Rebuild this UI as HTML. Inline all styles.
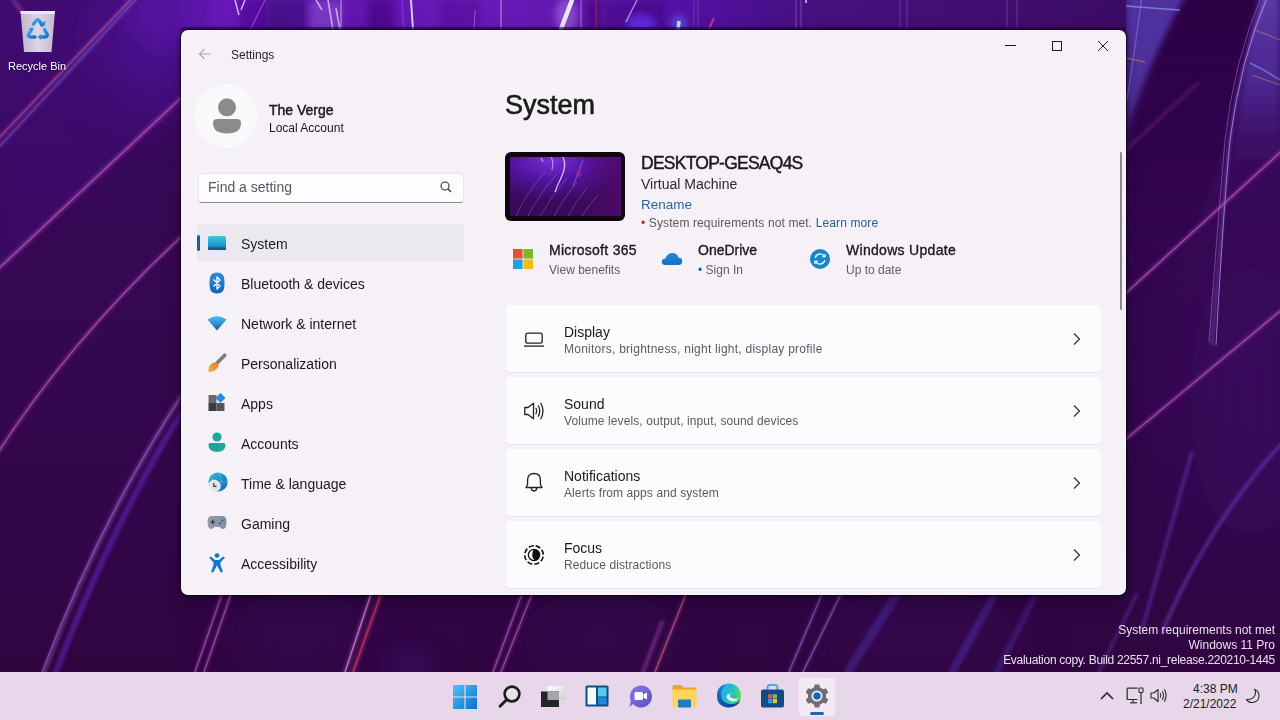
<!DOCTYPE html>
<html><head><meta charset="utf-8">
<style>
*{margin:0;padding:0;box-sizing:border-box}
html,body{width:1280px;height:720px;overflow:hidden}
body{font-family:"Liberation Sans",sans-serif;position:relative;background:#3b0c5e}
.a{position:absolute}
.t{position:absolute;white-space:nowrap;color:#1a1a1a;line-height:1}
#win{position:absolute;left:181px;top:30px;width:945px;height:565px;background:#f5f1f7;border-radius:7px;overflow:hidden;box-shadow:0 0 0 1px rgba(20,0,30,.55),0 0 3px 2px rgba(10,0,20,.35),0 6px 20px rgba(0,0,0,.3)}
#taskbar{position:absolute;left:0;top:672px;width:1280px;height:48px;background:#e8d6eb;border-top:2px solid #f0d6f0}
.lbl{font-size:14px}
.card{position:absolute;left:506px;width:595px;height:67px;background:#fcfbfe;border-radius:4px;box-shadow:0 1px 0 #e6e2e9}
.h{font-size:14px}
.s{font-size:12px;color:#5d5a60;letter-spacing:0.1px}
svg{position:absolute;overflow:visible}
</style></head><body>
<!-- WALLPAPER -->
<svg class="a" style="left:0;top:0" width="1280" height="720" viewBox="0 0 1280 720">
 <defs>
  <linearGradient id="bgv" x1="0" y1="0" x2="0" y2="1">
   <stop offset="0" stop-color="#3e0b68"/>
   <stop offset="0.35" stop-color="#360852"/>
   <stop offset="0.75" stop-color="#32064a"/>
   <stop offset="1" stop-color="#2e043a"/>
  </linearGradient>
  <filter id="b30" filterUnits="userSpaceOnUse" x="-200" y="-200" width="1680" height="1120"><feGaussianBlur stdDeviation="30"/></filter>
  <filter id="b12" filterUnits="userSpaceOnUse" x="-200" y="-200" width="1680" height="1120"><feGaussianBlur stdDeviation="12"/></filter>
  <filter id="b6" x="-50%" y="-50%" width="200%" height="200%"><feGaussianBlur stdDeviation="6"/></filter>
  <filter id="b3" x="-50%" y="-50%" width="200%" height="200%"><feGaussianBlur stdDeviation="3"/></filter>
  <filter id="b2" x="-50%" y="-50%" width="200%" height="200%"><feGaussianBlur stdDeviation="1.6"/></filter>
  <filter id="b1" x="-50%" y="-50%" width="200%" height="200%"><feGaussianBlur stdDeviation="0.6"/></filter>
  <linearGradient id="tbg" x1="0" y1="0" x2="1" y2="0">
   <stop offset="0" stop-color="#5614a4"/>
   <stop offset="0.04" stop-color="#6a1ab8"/>
   <stop offset="0.1" stop-color="#5a14a8"/>
   <stop offset="0.3" stop-color="#6a1ab8"/>
   <stop offset="0.45" stop-color="#6018ae"/>
   <stop offset="0.55" stop-color="#5010a0"/>
   <stop offset="0.68" stop-color="#46107c"/>
   <stop offset="0.85" stop-color="#420e72"/>
   <stop offset="1" stop-color="#3c0b64"/>
  </linearGradient>
  <linearGradient id="dkb" x1="0" y1="0" x2="0" y2="1"><stop offset="0" stop-color="#2a0442" stop-opacity="0.95"/><stop offset="0.5" stop-color="#2e0548" stop-opacity="0.75"/><stop offset="1" stop-color="#30064a" stop-opacity="0"/></linearGradient>
  <linearGradient id="rgr" x1="0" y1="0" x2="0" y2="1"><stop offset="0" stop-color="#6040b0" stop-opacity="0.9"/><stop offset="0.4" stop-color="#5030a0" stop-opacity="0.75"/><stop offset="0.85" stop-color="#3a0a60" stop-opacity="0"/></linearGradient>
 </defs>
 <rect width="1280" height="720" fill="url(#bgv)"/>
 <!-- broad glows -->
 <ellipse cx="420" cy="20" rx="300" ry="60" fill="#5a16a8" opacity="0.6" filter="url(#b30)"/>
 <ellipse cx="200" cy="40" rx="110" ry="70" fill="#5212a0" opacity="0.55" filter="url(#b30)"/>
 <ellipse cx="950" cy="0" rx="180" ry="40" fill="#4a1080" opacity="0.6" filter="url(#b30)"/>
 <path d="M1262 -10 Q1236 70 1232 230 L1280 230 L1280 -10 Z" fill="url(#rgr)" filter="url(#b3)"/>
 <path d="M1135 -10 L1190 -10 Q1150 60 1128 150 L1126 150 L1126 -10 Z" fill="#5238a8" opacity="0.85" filter="url(#b3)"/>
 
 <!-- region above line 2 slightly lighter -->
 <path d="M0 269 L182 97 L182 0 L0 0 Z" fill="#4a1090" opacity="0.3" filter="url(#b6)"/>
 <!-- bottom band patches -->
 <ellipse cx="300" cy="640" rx="70" ry="50" fill="#3c0866" opacity="0.3" filter="url(#b30)"/>
 <ellipse cx="410" cy="665" rx="25" ry="18" fill="#4a1890" opacity="0.35" filter="url(#b12)"/>
 <ellipse cx="600" cy="640" rx="80" ry="50" fill="#3a0862" opacity="0.3" filter="url(#b30)"/>
 <ellipse cx="920" cy="640" rx="100" ry="50" fill="#3e0a66" opacity="0.3" filter="url(#b30)"/>
 <!-- dark curved band on right -->
 <path d="M1190 -10 Q1150 60 1126 130 L1126 330 Q1200 240 1226 140 Q1244 60 1260 -10 Z" fill="url(#dkb)" filter="url(#b3)"/>
 <!-- top band -->
 <rect x="182" y="0" width="944" height="31" fill="url(#tbg)"/>
 <ellipse cx="170" cy="10" rx="40" ry="40" fill="#5a16a8" opacity="0.6" filter="url(#b12)"/>
 <ellipse cx="1250" cy="400" rx="60" ry="140" fill="#40086a" opacity="0.45" filter="url(#b30)"/>
 <!-- top streaks -->
 <g filter="url(#b3)">
  <rect x="368" y="0" width="26" height="32" fill="#40087a" opacity="0.6"/>
  <rect x="265" y="0" width="40" height="32" fill="#3c0870" opacity="0.5"/>
  <rect x="440" y="0" width="40" height="32" fill="#4a0c88" opacity="0.35"/>
  <rect x="605" y="0" width="60" height="32" fill="#3c0a78" opacity="0.45"/>
  <rect x="586" y="0" width="16" height="32" fill="#3a0868" opacity="0.55"/>
  <rect x="240" y="0" width="60" height="32" fill="#4a0c90" opacity="0.5"/>
  <rect x="310" y="0" width="32" height="32" fill="#9a60e0" opacity="0.45"/>
  <ellipse cx="566" cy="16" rx="11" ry="18" fill="#b080f0" opacity="0.45"/>
  <ellipse cx="641" cy="24" rx="14" ry="9" fill="#6a30ff" opacity="0.7"/>
  <ellipse cx="679" cy="24" rx="8" ry="9" fill="#5a60ff" opacity="0.6"/>
 </g>
 <g filter="url(#b1)" fill="none">
  <path d="M572 0 L561 29" stroke="#f4f8ff" stroke-width="4.5" opacity="0.9" stroke-linecap="round"/>
  <path d="M679 21 L678 30" stroke="#e0f4ff" stroke-width="3.5" opacity="0.85"/>
  <path d="M235 0 L239 15 M245 0 L241 10" stroke="#e8d0ff" stroke-width="1.6" opacity="0.8"/>
  <path d="M265 0 Q258 14 250 30" stroke="#a070e0" stroke-width="1.5" opacity="0.55"/>
  <path d="M316 0 L322 10 M328 0 L333 30 M336 8 L340 30" stroke="#e8d8ff" stroke-width="1.6" opacity="0.7"/>
  <path d="M341 0 V30" stroke="#d0a8ff" stroke-width="1.5" opacity="0.6"/>
  <path d="M411 0 L413 30" stroke="#f0e4ff" stroke-width="2" opacity="0.85"/>
  <path d="M402 0 L404 30" stroke="#7a40ff" stroke-width="2" opacity="0.5"/>
  <path d="M475 10 L474 30" stroke="#b090f0" stroke-width="1.2" opacity="0.5"/>
  <path d="M501 0 V30" stroke="#d0b0f8" stroke-width="1.4" opacity="0.6"/>
  <path d="M581 0 V30" stroke="#d890d0" stroke-width="1.4" opacity="0.5"/>
  <path d="M596 0 V30" stroke="#b02050" stroke-width="2" opacity="0.5"/>
  <path d="M637 0 L626 22" stroke="#d8c0ff" stroke-width="1.4" opacity="0.7"/>
  <path d="M694 0 V30 M698 0 V30" stroke="#8a40b0" stroke-width="1.5" opacity="0.5"/>
  <path d="M714 18 L709 29" stroke="#ff4070" stroke-width="2.2" opacity="0.65"/>
  <path d="M796 0 V30 M801 0 V30" stroke="#8a50c8" stroke-width="1.5" opacity="0.5"/>
  <path d="M806 0 V3" stroke="#ffe0f0" stroke-width="2" opacity="0.7"/>
  <path d="M900 0 V30 M907 0 V30 M1007 0 V30 M1017 0 V30" stroke="#8058c8" stroke-width="1.2" opacity="0.45"/>
  <path d="M1126 6 Q1150 8 1180 10" stroke="#a0c0ff" stroke-width="1.5" opacity="0.55"/>
  <path d="M1126 58 L1145 62" stroke="#ff8060" stroke-width="1.5" opacity="0.5"/>
  <path d="M1255 30 L1280 40 M1252 75 L1280 85" stroke="#d09060" stroke-width="1.3" opacity="0.5"/>
  <path d="M1250 63 Q1265 70 1280 80" stroke="#a0c0ff" stroke-width="1.5" opacity="0.45"/>
 </g>
 <rect x="181" y="27" width="945" height="3" fill="#2a0450" opacity="0.55" filter="url(#b1)"/>
 <!-- bright curved line on right -->
 <path d="M1268 -5 Q1240 60 1230 140 Q1222 220 1212 345" stroke="#9070e0" stroke-width="3" fill="none" opacity="0.35" filter="url(#b2)"/>
 <path d="M1268 -5 Q1240 60 1230 140 Q1224 200 1216 345" stroke="#c0a0f0" stroke-width="1" fill="none" opacity="0.7" filter="url(#b1)"/>
 <path d="M1262 -5 Q1234 60 1225 140 Q1218 220 1209 342" stroke="#b080e0" stroke-width="1" fill="none" opacity="0.5" filter="url(#b1)"/>
 <path d="M1142 -5 Q1135 50 1127 100" stroke="#8a70e0" stroke-width="1.5" fill="none" opacity="0.6" filter="url(#b1)"/>
 <!-- diagonal lines: glow -->
 <g fill="none" filter="url(#b2)" stroke-linecap="round" stroke="#9a3aa8" stroke-width="4" opacity="0.55">
  <path d="M-5 142 L135 -5" stroke="#a84a98" stroke-width="3"/>
  <path d="M0 146 L140 -5" stroke="#7a50c0" stroke-width="3"/>
  <path d="M13 0 L22 12"/>
  <path d="M-5 272 L182 97" stroke-width="5"/>
  <path d="M-5 457 Q70 340 182 236"/>
  <path d="M44 672 Q100 520 182 395" stroke="#9048a8" stroke-width="5"/>
  <path d="M56 672 Q112 525 182 412" stroke="#6a28c0" stroke-width="6"/>
  <path d="M195 672 L222 594 M204 672 L231 594" stroke-width="3"/>
  <path d="M345 672 L371 594"/>
  <path d="M353 672 L381 594" stroke="#a02860" stroke-width="5"/>
  <path d="M493 672 L522 594 M501 672 L532 594" stroke-width="3"/>
  <path d="M643 672 L662 622"/>
  <path d="M655 672 L686 594" stroke="#a04070" stroke-width="3"/>
  <path d="M789 672 L822 594 M803 672 L841 594" stroke="#7040a8" stroke-width="3"/>
  <path d="M848 672 L897 594" stroke="#5a40d0" stroke-width="9" opacity="0.6"/>
  <path d="M952 672 L995 594" stroke="#5a40d0" stroke-width="8" opacity="0.6"/>
  <path d="M997 672 L1036 594" stroke="#5a40c8" stroke-width="7" opacity="0.5"/>
  <path d="M1099 672 L1137 594" stroke="#7a48c0" stroke-width="4" opacity="0.6"/>
  <path d="M1126 150 L1198 83" opacity="0.5"/>
  <path d="M1126 293 L1285 148"/>
  <path d="M1126 439 L1285 307"/>
  <path d="M1162 632 Q1210 520 1285 440" stroke="#7040c0"/>
  <path d="M1142 630 L1192 452" stroke="#5a38b0"/>
 </g>
 <!-- diagonal lines: core -->
 <g fill="none" filter="url(#b1)" stroke-linecap="round" stroke="#c070c8" stroke-width="1.1" opacity="0.6">
  <path d="M-5 142 L135 -5" stroke="#c06aa8" opacity="0.7"/>
  <path d="M0 146 L140 -5" stroke="#9070d0" opacity="0.6"/>
  <path d="M-5 272 L182 97"/>
  <path d="M-5 457 Q70 340 182 236"/>
  <path d="M42 672 Q100 520 182 395" stroke="#a070f0"/>
  <path d="M195 672 L222 594 M204 672 L231 594"/>
  <path d="M345 672 L371 594" stroke="#f0c0f8" stroke-width="1.4" opacity="0.9"/>
  <path d="M353 672 L381 594" stroke="#d04070" stroke-width="1.6"/>
  <path d="M493 672 L522 594 M501 672 L532 594"/>
  <path d="M655 672 L686 594" stroke="#d08090"/>
  <path d="M789 672 L822 594 M803 672 L841 594" stroke="#b070c0"/>
  <path d="M1126 293 L1285 148"/>
  <path d="M1126 439 L1285 307"/>
 </g>
</svg>

<!-- Recycle bin -->
<svg style="left:18px;top:9px" width="40" height="46" viewBox="0 0 40 46">
 <defs><linearGradient id="rbg" x1="0" y1="0" x2="1" y2="0"><stop offset="0" stop-color="#bdb4ca"/><stop offset="0.5" stop-color="#dcd6e4"/><stop offset="1" stop-color="#c4bad0"/></linearGradient>
 <linearGradient id="rcy" x1="0" y1="0" x2="1" y2="1"><stop offset="0" stop-color="#3cb0f0"/><stop offset="1" stop-color="#1a6cc8"/></linearGradient></defs>
 <path d="M2.5 2 L37 2 L33.5 43 L6 43 Z" fill="url(#rbg)"/>
 <path d="M2.5 2 L37 2 L36.7 5 L2.8 5 Z" fill="#ede6f4"/>
 <g stroke="url(#rcy)" stroke-width="3.4" fill="none" stroke-linecap="round" stroke-linejoin="round">
  <path d="M15.5 15 L18 11.5 Q19.5 9.8 21 11.5 L24 16"/>
  <path d="M26.5 20.5 L29 25 Q30 27.5 27 28 L22 28"/>
  <path d="M17 28 L12.5 28 Q9.5 27.5 10.8 25 L13 21"/>
 </g>
 <g fill="#2a8ee0">
  <path d="M22 14.5 L27 17 L27.5 12 Z"/>
  <path d="M23 25 L20 28 L23 31 Z"/>
  <path d="M11 19 L15.5 18.5 L14 23.5 Z"/>
 </g>
</svg>
<div class="t" style="left:8px;top:60.7px;font-size:11px;color:#fff;text-shadow:0 1px 2px rgba(0,0,0,.6)">Recycle Bin</div>

<!-- WINDOW -->
<div id="win"></div>
<!-- back arrow -->
<svg style="left:198px;top:48px" width="14" height="12" viewBox="0 0 14 12">
 <path d="M13 6 H1.5 M6.5 1 L1.5 6 L6.5 11" stroke="#a9a6ad" stroke-width="1.1" fill="none"/>
</svg>
<div class="t" style="left:231px;top:48.6px;font-size:12px;color:#262626">Settings</div>
<!-- caption buttons -->
<div class="a" style="left:1005px;top:45px;width:11px;height:1px;background:#1b1b1b"></div>
<div class="a" style="left:1052px;top:41px;width:10px;height:10px;border:1px solid #1b1b1b"></div>
<svg style="left:1097px;top:40px" width="12" height="12" viewBox="0 0 12 12">
 <path d="M1 1 L11 11 M11 1 L1 11" stroke="#1b1b1b" stroke-width="1" fill="none"/>
</svg>

<!-- avatar -->
<div class="a" style="left:194px;top:84px;width:64px;height:64px;border-radius:50%;background:radial-gradient(circle,#fafafc 0,#f9f8fb 70%,rgba(249,248,251,0) 100%)"></div>
<svg style="left:212px;top:98px" width="30" height="37" viewBox="0 0 30 37">
 <circle cx="15" cy="9.3" r="9" fill="#8b8b8b"/>
 <path d="M1 25 Q1 21 5 21 H25 Q29 21 29 25 Q29 35.5 15 35.5 Q1 35.5 1 25 Z" fill="#8b8b8b"/>
</svg>
<div class="t" style="left:269px;top:103.3px;font-size:14px;-webkit-text-stroke:0.45px #1a1a1a">The Verge</div>
<div class="t" style="left:269px;top:121.6px;font-size:12px">Local Account</div>

<!-- search -->
<div class="a" style="left:198px;top:173px;width:266px;height:30px;background:#fdfcfe;border-radius:4px;border:1px solid #e8e5eb;border-bottom:1px solid #8c898f"></div>
<div class="t" style="left:208px;top:180px;font-size:14px;color:#5b5860">Find a setting</div>
<svg style="left:440px;top:181px" width="12" height="12" viewBox="0 0 12 12">
 <circle cx="5" cy="5" r="4" stroke="#333" stroke-width="1.1" fill="none"/>
 <path d="M8 8 L11 11" stroke="#333" stroke-width="1.2"/>
</svg>

<!-- nav -->
<div class="a" style="left:197px;top:224px;width:267px;height:38px;background:#ece8ef;border-radius:4px"></div>
<div class="a" style="left:197px;top:235px;width:3px;height:16px;background:#1d5d9b;border-radius:2px"></div>
<div class="t lbl" style="left:241px;top:237.4px">System</div>
<div class="t lbl" style="left:241px;top:277.4px">Bluetooth &amp; devices</div>
<div class="t lbl" style="left:241px;top:317.4px">Network &amp; internet</div>
<div class="t lbl" style="left:241px;top:357.4px">Personalization</div>
<div class="t lbl" style="left:241px;top:397.4px">Apps</div>
<div class="t lbl" style="left:241px;top:437.4px">Accounts</div>
<div class="t lbl" style="left:241px;top:477.4px">Time &amp; language</div>
<div class="t lbl" style="left:241px;top:517.4px">Gaming</div>
<div class="t lbl" style="left:241px;top:557.4px">Accessibility</div>


<!-- nav icons -->
<svg style="left:207px;top:235px" width="20" height="16" viewBox="0 0 20 16">
 <defs><linearGradient id="sysg" x1="0" y1="0" x2="0" y2="1"><stop offset="0" stop-color="#3ec6e6"/><stop offset="0.7" stop-color="#1b98c8"/><stop offset="1" stop-color="#0d5f94"/></linearGradient></defs>
 <rect x="1" y="1" width="18" height="14" rx="1.5" fill="url(#sysg)"/>
 <rect x="1" y="12.5" width="18" height="2.5" fill="#0b5687" opacity="0.8"/>
</svg>
<svg style="left:209px;top:272px" width="16" height="22" viewBox="0 0 16 22">
 <defs><linearGradient id="btg" x1="0" y1="0" x2="0" y2="1"><stop offset="0" stop-color="#2b8fe0"/><stop offset="1" stop-color="#1464b8"/></linearGradient></defs>
 <path d="M8 0.5 C14 0.5 15.5 4 15.5 11 C15.5 18 14 21.5 8 21.5 C2 21.5 0.5 18 0.5 11 C0.5 4 2 0.5 8 0.5 Z" fill="url(#btg)"/>
 <path d="M4.5 7.5 L11 14 L8 17 V5 L11 8 L4.5 14.5" stroke="#fff" stroke-width="1.3" fill="none" stroke-linejoin="round"/>
</svg>
<svg style="left:207px;top:315px" width="20" height="16" viewBox="0 0 20 16">
 <defs><linearGradient id="wfg" x1="0" y1="0" x2="0" y2="1"><stop offset="0" stop-color="#4cc2f0"/><stop offset="1" stop-color="#0f5fae"/></linearGradient></defs>
 <path d="M0.5 4.5 Q10 -2.5 19.5 4.5 L10 15.5 Z" fill="url(#wfg)"/>
</svg>
<svg style="left:207px;top:353px" width="20" height="20" viewBox="0 0 20 20">
 <path d="M10.5 9.5 L17.8 2.2" stroke="#7c7983" stroke-width="3.6" stroke-linecap="round"/>
 <defs><linearGradient id="brg" x1="0" y1="1" x2="1" y2="0"><stop offset="0" stop-color="#f7b04a"/><stop offset="1" stop-color="#e07a34"/></linearGradient></defs>
 <path d="M1.5 18.8 Q1 14 4 11 Q7 8.5 10.5 9.5 L11.5 10.5 Q12 14 8.5 17 Q5.5 19.3 1.5 18.8 Z" fill="url(#brg)"/>
</svg>
<svg style="left:208px;top:392px" width="19" height="20" viewBox="0 0 19 20">
 <rect x="0.5" y="3" width="8" height="8" fill="#6b6873"/>
 <rect x="0.5" y="11" width="8" height="8" fill="#3c3a42"/>
 <rect x="8.5" y="11" width="8" height="8" fill="#56535c"/>
 <path d="M12.5 1 L17.5 6 L12.5 11 L7.5 6 Z" fill="#1f8ee0"/>
</svg>
<svg style="left:208px;top:432px" width="18" height="21" viewBox="0 0 18 21">
 <circle cx="9" cy="5" r="4.6" fill="#1fa59a"/>
 <path d="M0.5 12.5 Q0.5 11 2.5 11 H15.5 Q17.5 11 17.5 12.5 Q17.5 20 9 20 Q0.5 20 0.5 12.5 Z" fill="#1fa59a"/>
</svg>
<svg style="left:207px;top:472px" width="21" height="21" viewBox="0 0 21 21">
 <defs><linearGradient id="tmg" x1="0" y1="0" x2="1" y2="1"><stop offset="0" stop-color="#36c2c8"/><stop offset="0.5" stop-color="#1f8fd0"/><stop offset="1" stop-color="#1460b0"/></linearGradient></defs>
 <circle cx="11" cy="10" r="9.6" fill="url(#tmg)"/>
 <path d="M4 5 Q8 9 5 14 M12 1 Q16 8 13 19 M2 10 H20" stroke="#7ed8e8" stroke-width="0.8" fill="none" opacity="0.5"/>
 <circle cx="7.3" cy="14" r="5.8" fill="#e4e2e8" stroke="#f7f6f9" stroke-width="1"/>
 <path d="M6.8 11 V14.4 H9.4" stroke="#333" stroke-width="1.1" fill="none"/>
</svg>
<svg style="left:207px;top:515px" width="20" height="15" viewBox="0 0 20 15">
 <defs><linearGradient id="gmg" x1="0" y1="0" x2="1" y2="0"><stop offset="0" stop-color="#9e9ba6"/><stop offset="1" stop-color="#7d8ea6"/></linearGradient></defs>
 <path d="M4 1 H16 Q19.5 1 19.5 7 Q19.5 14 16 14 Q14 14 12.5 12 H7.5 Q6 14 4 14 Q0.5 14 0.5 7 Q0.5 1 4 1 Z" fill="url(#gmg)"/>
 <path d="M3.5 7 H8 M5.75 4.8 V9.2" stroke="#222" stroke-width="1.1"/>
 <circle cx="13" cy="8.5" r="1.1" fill="#1b64b0"/><circle cx="15.5" cy="5.5" r="1.1" fill="#1b64b0"/>
</svg>
<svg style="left:208px;top:553px" width="18" height="20" viewBox="0 0 18 20">
 <circle cx="9" cy="2.6" r="2.4" fill="#1478c8"/>
 <path d="M1 4.5 L3 3.5 L7 7 H11 L15 3.5 L17 4.5 L12.5 9.5 V12 L15 19 L12.8 19.5 L9 12.5 L5.2 19.5 L3 19 L5.5 12 V9.5 Z" fill="#1478c8"/>
</svg>

<!-- content header -->
<div class="t" style="left:505px;top:91.5px;font-size:27px;-webkit-text-stroke:0.6px #1a1a1a">System</div>
<div class="t" style="left:641px;top:155.2px;font-size:17.5px;letter-spacing:-0.75px;-webkit-text-stroke:0.45px #1a1a1a">DESKTOP-GESAQ4S</div>
<div class="t" style="left:641px;top:176.8px;font-size:14px;color:#2b2b2b">Virtual Machine</div>
<div class="t" style="left:641px;top:198.2px;font-size:13.5px;color:#2a64a0">Rename</div>
<div class="t" style="left:641px;top:216.8px;font-size:12px;letter-spacing:0.12px;color:#5b5860"><span style="color:#c42b1c">&#8226;</span> System requirements not met. <span style="color:#1f5fa0">Learn more</span></div>

<div class="t" style="left:549px;top:243.2px;font-size:14px;letter-spacing:0.3px;-webkit-text-stroke:0.35px #1a1a1a">Microsoft 365</div>
<div class="t" style="left:549px;top:264.1px;font-size:12px;color:#5f5c62">View benefits</div>
<div class="t" style="left:698px;top:243.2px;font-size:14px;-webkit-text-stroke:0.35px #1a1a1a">OneDrive</div>
<div class="t" style="left:698px;top:264.1px;font-size:12px;color:#5f5c62"><span style="color:#1f5fa0">&#8226;</span> Sign In</div>
<div class="t" style="left:846px;top:243.2px;font-size:14px;letter-spacing:0.3px;-webkit-text-stroke:0.35px #1a1a1a">Windows Update</div>
<div class="t" style="left:846px;top:264.1px;font-size:12px;color:#5f5c62">Up to date</div>

<!-- cards -->
<div class="card" style="top:305px"></div>
<div class="card" style="top:377px"></div>
<div class="card" style="top:449px"></div>
<div class="card" style="top:521px"></div>
<div class="t h" style="left:564px;top:325.4px">Display</div>
<div class="t s" style="left:564px;top:343.1px;letter-spacing:0.25px">Monitors, brightness, night light, display profile</div>
<div class="t h" style="left:564px;top:397.4px">Sound</div>
<div class="t s" style="left:564px;top:415.1px">Volume levels, output, input, sound devices</div>
<div class="t h" style="left:564px;top:469.4px">Notifications</div>
<div class="t s" style="left:564px;top:487.1px">Alerts from apps and system</div>
<div class="t h" style="left:564px;top:541.4px">Focus</div>
<div class="t s" style="left:564px;top:559.1px">Reduce distractions</div>


<!-- thumbnail -->
<svg style="left:505px;top:152px" width="120" height="69" viewBox="0 0 120 69">
 <defs>
  <radialGradient id="thg" cx="0.38" cy="0.05" r="0.7"><stop offset="0" stop-color="#7a2ed8"/><stop offset="0.5" stop-color="#5214a0"/><stop offset="1" stop-color="#3a0a5c"/></radialGradient>
  <linearGradient id="thr" x1="0" y1="0" x2="1" y2="0"><stop offset="0.6" stop-color="#5a0a70" stop-opacity="0"/><stop offset="1" stop-color="#5a0a70" stop-opacity="0.6"/></linearGradient>
  <clipPath id="thc"><rect x="5" y="5" width="111" height="59"/></clipPath>
  <filter id="thb"><feGaussianBlur stdDeviation="0.6"/></filter>
 </defs>
 <rect x="0" y="0" width="120" height="69" rx="6" fill="#10060f"/>
 <rect x="5" y="5" width="111" height="59" fill="url(#thg)"/>
 <rect x="5" y="5" width="111" height="59" fill="url(#thr)"/>
 <g clip-path="url(#thc)" fill="none" filter="url(#thb)">
  <g stroke="#c080f0" stroke-opacity="0.35" stroke-width="1">
   <path d="M10 66 Q22 40 40 20"/><path d="M22 66 Q34 42 52 22"/><path d="M34 66 Q46 44 62 26"/>
   <path d="M48 66 Q58 46 72 30"/><path d="M62 66 Q70 50 82 36"/><path d="M76 66 Q84 52 94 42"/>
  </g>
  <path d="M58 5 Q62 14 56 26 Q52 34 50 40" stroke="#eadcff" stroke-opacity="0.8" stroke-width="1.4"/>
  <path d="M46 5 Q49 10 47 18" stroke="#d8b8ff" stroke-opacity="0.7" stroke-width="1.2"/>
  <path d="M36 6 L38 10" stroke="#e0c8ff" stroke-opacity="0.7" stroke-width="1.2"/>
  <path d="M78 8 Q74 20 68 34" stroke="#b070f0" stroke-opacity="0.5" stroke-width="1.2"/>
  <circle cx="74" cy="22" r="3" fill="#c03080" opacity="0.4"/>
 </g>
</svg>
<!-- M365 logo -->
<svg style="left:512px;top:248px" width="22" height="22" viewBox="0 0 22 22">
 <rect x="1" y="1" width="9.6" height="9.6" fill="#e4532e"/>
 <rect x="11.4" y="1" width="9.6" height="9.6" fill="#78b82c"/>
 <rect x="1" y="11.4" width="9.6" height="9.6" fill="#1ea0e0"/>
 <rect x="11.4" y="11.4" width="9.6" height="9.6" fill="#f6b81c"/>
</svg>
<!-- OneDrive -->
<svg style="left:661px;top:251px" width="22" height="15" viewBox="0 0 22 15">
 <defs><linearGradient id="odg" x1="0" y1="0" x2="0" y2="1"><stop offset="0" stop-color="#1e8ad8"/><stop offset="1" stop-color="#1570c0"/></linearGradient></defs>
 <path d="M4.5 14 Q0.5 14 0.8 10.5 Q1.2 7.5 4.5 7.5 Q6 2 11.5 2 Q16 2 17.5 6.5 Q21.5 7 21.2 10.5 Q21 14 17.5 14 Z" fill="url(#odg)"/>
</svg>
<!-- Windows Update -->
<svg style="left:809px;top:248px" width="22" height="22" viewBox="0 0 22 22">
 <circle cx="11" cy="11" r="10" fill="#1a86c8"/>
 <path d="M6.2 9.8 A5 5 0 0 1 15.3 8.2" stroke="#e8f6ff" stroke-width="1.4" fill="none"/>
 <path d="M15.8 12.2 A5 5 0 0 1 6.7 13.8" stroke="#e8f6ff" stroke-width="1.4" fill="none"/>
 <path d="M13.2 8.6 L16 8.8 L16.2 6" stroke="#e8f6ff" stroke-width="1.3" fill="none"/>
 <path d="M8.8 13.4 L6 13.2 L5.8 16" stroke="#e8f6ff" stroke-width="1.3" fill="none"/>
</svg>
<!-- card icons -->
<svg style="left:523px;top:332px" width="22" height="16" viewBox="0 0 22 16">
 <rect x="2.8" y="1.2" width="16.4" height="10" rx="1.8" stroke="#222" stroke-width="1.3" fill="none"/>
 <path d="M1 14.1 H21" stroke="#333" stroke-width="1.4"/>
</svg>
<svg style="left:523px;top:401px" width="22" height="20" viewBox="0 0 22 20">
 <path d="M1.8 6.5 H5 L10.5 2.2 V17.8 L5 13.5 H1.8 Z" stroke="#222" stroke-width="1.3" fill="none" stroke-linejoin="round"/>
 <path d="M13 7.3 Q14.5 10 13 12.7" stroke="#222" stroke-width="1.3" fill="none" stroke-linecap="round"/>
 <path d="M15.3 4.8 Q18.3 10 15.3 15.2" stroke="#222" stroke-width="1.3" fill="none" stroke-linecap="round"/>
 <path d="M17.8 2.2 Q22.2 10 17.8 17.8" stroke="#222" stroke-width="1.3" fill="none" stroke-linecap="round"/>
</svg>
<svg style="left:524px;top:472px" width="20" height="21" viewBox="0 0 20 21">
 <path d="M2 15.5 L3.6 12.5 V8 Q3.6 1.5 10 1.5 Q16.4 1.5 16.4 8 V12.5 L18 15.5 Z" stroke="#222" stroke-width="1.3" fill="none" stroke-linejoin="round"/>
 <path d="M7.3 15.8 Q7.3 19 10 19 Q12.7 19 12.7 15.8" stroke="#222" stroke-width="1.3" fill="none"/>
</svg>
<svg style="left:523px;top:544px" width="22" height="22" viewBox="0 0 22 22">
 <circle cx="11" cy="11" r="9.3" stroke="#111" stroke-width="1.6" fill="none" stroke-dasharray="5.2 2.1" transform="rotate(-80 11 11)"/>
 <circle cx="11" cy="11" r="5.6" stroke="#111" stroke-width="1.3" fill="none"/>
 <path d="M10.5 5.4 A5.6 5.6 0 1 1 12 16.5 Q9 14 9.3 10.5 Q9.5 7.5 10.5 5.4 Z" fill="#111"/>
</svg>
<!-- chevrons -->
<svg style="left:1072px;top:332px" width="10" height="14" viewBox="0 0 10 14">
 <path d="M2 1.5 L7.5 7 L2 12.5" stroke="#3a3a3a" stroke-width="1.3" fill="none"/>
</svg>
<svg style="left:1072px;top:404px" width="10" height="14" viewBox="0 0 10 14">
 <path d="M2 1.5 L7.5 7 L2 12.5" stroke="#3a3a3a" stroke-width="1.3" fill="none"/>
</svg>
<svg style="left:1072px;top:476px" width="10" height="14" viewBox="0 0 10 14">
 <path d="M2 1.5 L7.5 7 L2 12.5" stroke="#3a3a3a" stroke-width="1.3" fill="none"/>
</svg>
<svg style="left:1072px;top:548px" width="10" height="14" viewBox="0 0 10 14">
 <path d="M2 1.5 L7.5 7 L2 12.5" stroke="#3a3a3a" stroke-width="1.3" fill="none"/>
</svg>

<!-- scrollbar -->
<div class="a" style="left:1120px;top:152px;width:2px;height:158px;background:#8a878d;border-radius:1px"></div>

<!-- TASKBAR -->
<div id="taskbar"></div>
<div class="t" style="left:1193px;top:683px;font-size:12px;color:#1a1a1a">4:38 PM</div>
<div class="t" style="left:1183px;top:698px;font-size:12px;color:#1a1a1a">2/21/2022</div>


<!-- taskbar icons -->
<svg style="left:452px;top:684px" width="26" height="26" viewBox="0 0 26 26">
 <defs><linearGradient id="stg" x1="0" y1="0" x2="1" y2="1"><stop offset="0" stop-color="#4cc4f6"/><stop offset="1" stop-color="#0c6fcf"/></linearGradient></defs>
 <path d="M1 1 H12.4 V12.4 H1 Z M13.6 1 H25 V12.4 H13.6 Z M1 13.6 H12.4 V25 H1 Z M13.6 13.6 H25 V25 H13.6 Z" fill="url(#stg)"/>
</svg>
<svg style="left:497px;top:684px" width="26" height="26" viewBox="0 0 26 26">
 <circle cx="15" cy="10" r="7.4" stroke="#1c1c1c" stroke-width="2.6" fill="#e8e0ea"/>
 <path d="M9.8 15.4 L3 22.3" stroke="#1c1c1c" stroke-width="2.8" stroke-linecap="round"/>
</svg>
<svg style="left:540px;top:684px" width="27" height="26" viewBox="0 0 27 26">
 <defs><linearGradient id="tvg" x1="0" y1="0" x2="1" y2="1"><stop offset="0" stop-color="#ffffff"/><stop offset="1" stop-color="#d0ccd4"/></linearGradient></defs>
 <rect x="7.5" y="2" width="17.5" height="14" fill="url(#tvg)"/>
 <rect x="1" y="7.5" width="18" height="15.5" fill="#252428"/>
 <rect x="7.5" y="7.5" width="11.5" height="8.5" fill="#a8a5ad"/>
</svg>
<svg style="left:584px;top:684px" width="26" height="25" viewBox="0 0 26 25">
 <rect x="1.5" y="1.5" width="23" height="21" rx="1.5" fill="#0f4f86"/>
 <rect x="3.5" y="3.5" width="8.5" height="17" fill="#f4fbff"/>
 <rect x="14" y="3.5" width="8.5" height="9" fill="#5cc8f0"/>
 <rect x="14" y="13.5" width="8.5" height="7" fill="#1f8ae0"/>
</svg>
<svg style="left:628px;top:684px" width="25" height="25" viewBox="0 0 25 25">
 <defs><linearGradient id="chg" x1="0" y1="0" x2="1" y2="1"><stop offset="0" stop-color="#8b7ce6"/><stop offset="1" stop-color="#5a4bc8"/></linearGradient></defs>
 <path d="M12.5 1.5 A11 11 0 1 1 5 20 L1.5 23 L2.8 17 A11 11 0 0 1 12.5 1.5 Z" fill="url(#chg)"/>
 <rect x="6.5" y="8" width="8.5" height="8" rx="1.5" fill="#fff"/>
 <path d="M15.5 10.5 L19 8.5 V15.5 L15.5 13.5 Z" fill="#fff"/>
</svg>
<svg style="left:671px;top:683px" width="27" height="26" viewBox="0 0 27 26">
 <path d="M1.5 3.5 Q1.5 2 3 2 H10 L12.5 4.5 H24 Q25.5 4.5 25.5 6 V8 H1.5 Z" fill="#e9a526"/>
 <path d="M1.5 6.5 H25.5 V23 Q25.5 24.5 24 24.5 H3 Q1.5 24.5 1.5 23 Z" fill="#fcd55a"/>
 <rect x="7" y="16.5" width="13" height="8" rx="1" fill="#1e7bc4"/>
</svg>
<svg style="left:716px;top:682px" width="26" height="27" viewBox="0 0 26 27">
 <defs>
  <linearGradient id="edg1" x1="0" y1="0" x2="1" y2="0.4"><stop offset="0" stop-color="#28a8e8"/><stop offset="0.55" stop-color="#20bcd0"/><stop offset="1" stop-color="#5ad860"/></linearGradient>
  <linearGradient id="edg2" x1="0" y1="0" x2="0.4" y2="1"><stop offset="0" stop-color="#1c80d8"/><stop offset="1" stop-color="#0c4aa0"/></linearGradient>
 </defs>
 <circle cx="13" cy="13.5" r="12" fill="url(#edg1)"/>
 <path d="M1 13.5 Q1 4 10 2 Q4.5 7 5 13 Q5.5 21 14 22 Q20.5 22.5 24.6 17.5 Q22.5 25 13 25.5 Q1 25 1 13.5 Z" fill="url(#edg2)"/>
 <ellipse cx="16" cy="15.5" rx="5.5" ry="3.6" fill="#e8f2f6" transform="rotate(15 16 15.5)"/>
 <ellipse cx="17.8" cy="14.2" rx="4.2" ry="2.4" fill="#30c0a8" transform="rotate(15 17.8 14.2)"/>
</svg>
<svg style="left:760px;top:683px" width="25" height="26" viewBox="0 0 25 26">
 <path d="M7.5 7 V4.5 Q7.5 2 10 2 H15 Q17.5 2 17.5 4.5 V7" stroke="#4aa8e8" stroke-width="2" fill="none"/>
 <rect x="1" y="6.5" width="23" height="18" rx="2" fill="#134a88"/>
 <rect x="8" y="11.3" width="4.2" height="4.2" fill="#e9573a"/><rect x="12.8" y="11.3" width="4.2" height="4.2" fill="#7ac043"/>
 <rect x="8" y="16" width="4.2" height="4.2" fill="#22a4e8"/><rect x="12.8" y="16" width="4.2" height="4.2" fill="#f4c032"/>
</svg>
<div class="a" style="left:799px;top:678px;width:36px;height:38px;background:#f3e9f5;border-radius:4px;box-shadow:0 0 0 1px #eadcee"></div>
<svg style="left:804px;top:683px" width="26" height="26" viewBox="0 0 26 26">
 <path d="M10.6 1.5 H15.4 L16 4.6 Q17.6 5.2 18.9 6.3 L21.9 5.2 L24.3 9.4 L21.9 11.4 Q22.2 13 21.9 14.6 L24.3 16.6 L21.9 20.8 L18.9 19.7 Q17.6 20.8 16 21.4 L15.4 24.5 H10.6 L10 21.4 Q8.4 20.8 7.1 19.7 L4.1 20.8 L1.7 16.6 L4.1 14.6 Q3.8 13 4.1 11.4 L1.7 9.4 L4.1 5.2 L7.1 6.3 Q8.4 5.2 10 4.6 Z" fill="#6e6e74"/>
 <circle cx="13" cy="13" r="5.6" fill="#dde6f4"/>
 <circle cx="13" cy="13" r="3.6" fill="#1d5fae"/>
</svg>
<div class="a" style="left:810px;top:712px;width:14px;height:3px;background:#1f64b0;border-radius:2px"></div>

<!-- tray -->
<svg style="left:1099px;top:690px" width="16" height="11" viewBox="0 0 16 11">
 <path d="M2 9 L8 3 L14 9" stroke="#2a2a2a" stroke-width="1.6" fill="none"/>
</svg>
<svg style="left:1126px;top:687px" width="19" height="18" viewBox="0 0 19 18">
 <path d="M1.2 1.2 H11.5 M1.2 1.2 V12.5 H11.5" stroke="#2a2a2a" stroke-width="1.2" fill="none"/>
 <path d="M4 15.8 H11" stroke="#2a2a2a" stroke-width="1.2"/><path d="M7 12.5 V15.8" stroke="#2a2a2a" stroke-width="1.2"/>
 <rect x="13" y="1" width="4" height="4.5" rx="0.8" stroke="#2a2a2a" stroke-width="1.1" fill="none"/>
 <path d="M15 5.5 V17" stroke="#2a2a2a" stroke-width="1.2"/>
</svg>
<svg style="left:1150px;top:688px" width="18" height="15" viewBox="0 0 18 15">
 <path d="M1 5 H3.8 L8 1.5 V13.5 L3.8 10 H1 Z" stroke="#2a2a2a" stroke-width="1.1" fill="none" stroke-linejoin="round"/>
 <path d="M10.2 5.3 Q11.4 7.5 10.2 9.7" stroke="#2a2a2a" stroke-width="1.1" fill="none"/>
 <path d="M12.3 3.3 Q14.6 7.5 12.3 11.7" stroke="#2a2a2a" stroke-width="1.1" fill="none"/>
 <path d="M14.4 1.3 Q17.8 7.5 14.4 13.7" stroke="#2a2a2a" stroke-width="1.1" fill="none"/>
</svg>
<svg style="left:1245px;top:688px" width="16" height="16" viewBox="0 0 16 16">
 <path d="M9.5 1.2 Q14.5 3.5 14 8.5 Q13.5 13.5 8 14.5 Q3.5 15 1.5 11.5 Q7 12 9.5 8 Q11.5 4.5 9.5 1.2 Z" stroke="#2a2a2a" stroke-width="1.1" fill="none" stroke-linejoin="round"/>
</svg>

<!-- watermark -->
<div class="t" style="right:5px;top:624px;font-size:12px;color:#eadff0;text-align:right">System requirements not met</div>
<div class="t" style="right:5px;top:639px;font-size:12px;color:#eadff0;text-align:right">Windows 11 Pro</div>
<div class="t" style="right:5px;top:654px;font-size:12px;letter-spacing:-0.29px;color:#eadff0;text-align:right">Evaluation copy. Build 22557.ni_release.220210-1445</div>
</body></html>
